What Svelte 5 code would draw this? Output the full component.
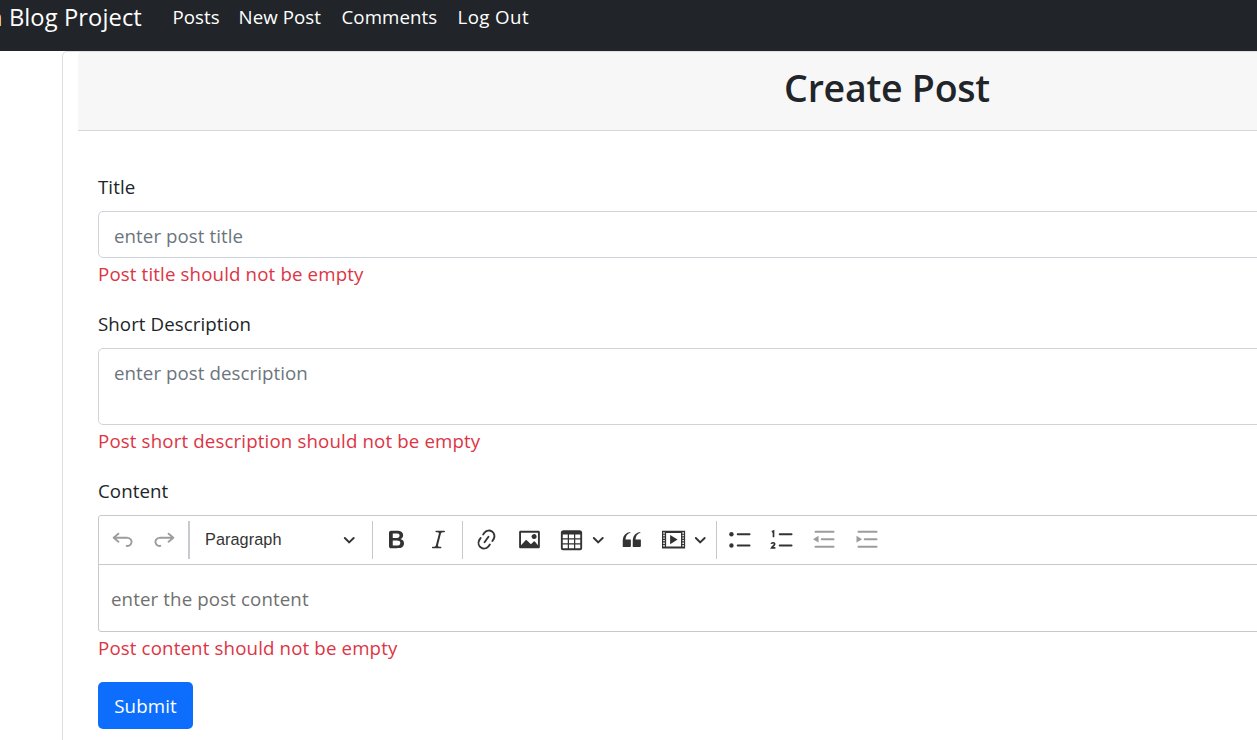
<script>
  const links = [
    { label: 'Posts', width: 66 },
    { label: 'New Post', width: 103 },
    { label: 'Comments', width: 116 },
    { label: 'Log Out', width: 92 }
  ];
  const icons = {
    undo: 'm5.042 9.367 2.189 1.837a.75.75 0 0 1-.965 1.149l-3.788-3.18a.747.747 0 0 1-.21-.284.75.75 0 0 1 .17-.945L6.23 4.762a.75.75 0 1 1 .964 1.15L4.863 7.866h8.917A.75.75 0 0 1 14 7.9a4 4 0 1 1-1.477 7.718l.344-1.489a2.5 2.5 0 1 0 1.094-4.73l.008-.032H5.042z',
    redo: 'm14.958 9.367-2.189 1.837a.75.75 0 0 0 .965 1.149l3.788-3.18a.747.747 0 0 0 .21-.284.75.75 0 0 0-.17-.945L13.77 4.762a.75.75 0 1 0-.964 1.15l2.331 1.955H6.22A.75.75 0 0 0 6 7.9a4 4 0 1 0 1.477 7.718l-.344-1.489A2.5 2.5 0 1 1 6.039 9.4l-.008-.032h8.927z',
    bold: 'M10.187 17H5.773c-.637 0-1.092-.138-1.364-.415-.273-.277-.409-.718-.409-1.323V4.738c0-.617.14-1.062.419-1.332.279-.27.73-.406 1.354-.406h4.68c.69 0 1.288.041 1.793.124.506.083.96.242 1.36.478.341.197.644.447.906.75a3.262 3.262 0 0 1 .808 2.162c0 1.401-.722 2.426-2.167 3.075C15.05 10.175 16 11.315 16 13.01a3.756 3.756 0 0 1-2.296 3.504 6.1 6.1 0 0 1-1.517.377c-.571.073-1.238.11-2 .11zm-.217-6.217H7v4.087h3.069c1.977 0 2.965-.69 2.965-2.072 0-.707-.256-1.22-.768-1.537-.512-.319-1.277-.478-2.296-.478zM7 5.13v3.619h2.606c.729 0 1.292-.067 1.69-.2a1.6 1.6 0 0 0 .91-.765c.165-.267.247-.566.247-.897 0-.707-.26-1.176-.778-1.409-.519-.232-1.31-.348-2.375-.348H7z',
    italic: 'm9.586 14.633.021.004c-.036.335.095.655.393.962.082.083.173.15.274.201h1.474a.6.6 0 1 1 0 1.2H5.304a.6.6 0 0 1 0-1.2h1.15c.474-.07.809-.182 1.005-.334.157-.122.291-.32.404-.597l2.416-9.55a1.053 1.053 0 0 0-.281-.823 1.12 1.12 0 0 0-.442-.296H8.15a.6.6 0 0 1 0-1.2h6.443a.6.6 0 1 1 0 1.2h-1.195c-.376.056-.65.155-.823.296-.215.175-.423.439-.623.79l-2.366 9.347z',
    link: 'm11.077 15 .991-1.416a.75.75 0 1 1 1.229.86l-1.148 1.64a.748.748 0 0 1-.217.206 5.251 5.251 0 0 1-8.503-5.955.741.741 0 0 1 .12-.274l1.147-1.639a.75.75 0 1 1 1.228.86L4.933 10.7l.006.003a3.75 3.75 0 0 0 6.132 4.294l.006.004zm5.494-5.335a.748.748 0 0 1-.12.274l-1.147 1.639a.75.75 0 1 1-1.228-.86l.86-1.23a3.75 3.75 0 0 0-6.144-4.301l-.86 1.229a.75.75 0 0 1-1.229-.86l1.148-1.64a.748.748 0 0 1 .217-.206 5.251 5.251 0 0 1 8.503 5.955zm-4.563-2.532a.75.75 0 0 1 .184 1.045l-3.155 4.505a.75.75 0 1 1-1.229-.86l3.155-4.506a.75.75 0 0 1 1.045-.184z',
    image: 'M6.91 10.54c.26-.23.64-.21.88.03l3.36 3.14 2.23-2.06a.64.64 0 0 1 .87 0l2.52 2.97V4.5H3.2v10.12l3.71-4.08zm10.27-7.51c.6 0 1.09.47 1.09 1.05v11.84c0 .59-.49 1.06-1.09 1.06H2.79c-.6 0-1.09-.47-1.09-1.06V4.08c0-.58.49-1.05 1.1-1.05h14.38zm-5.22 5.56a1.96 1.96 0 1 1 3.4-1.96 1.96 1.96 0 0 1-3.4 1.96z',
    table: 'M3 6v3h4V6H3zm0 4v3h4v-3H3zm0 4v3h4v-3H3zm5 3h4v-3H8v3zm5 0h4v-3h-4v3zm4-4v-3h-4v3h4zm0-4V6h-4v3h4zm1.5 8a1.5 1.5 0 0 1-1.5 1.5H3A1.5 1.5 0 0 1 1.5 17V4c.222-.863 1.068-1.5 2-1.5h13c.932 0 1.778.637 2 1.5v13zM12 13v-3H8v3h4zm0-4V6H8v3h4z',
    quote: 'M3 10.423a6.5 6.5 0 0 1 6.056-6.408l.038.67C6.448 5.423 5.354 7.663 5.22 10H9c.552 0 .5.432.5.986v4.511c0 .554-.448.503-1 .503h-5c-.552 0-.5-.449-.5-1.003v-4.574zm8 0a6.5 6.5 0 0 1 6.056-6.408l.038.67c-2.646.739-3.74 2.979-3.873 5.315H17c.552 0 .5.432.5.986v4.511c0 .554-.448.503-1 .503h-5c-.552 0-.5-.449-.5-1.003v-4.574z'
  };
</script>

{#snippet icon(name)}
  <span class="tool"><svg viewBox="0 0 20 20"><path d={icons[name]} /></svg></span>
{/snippet}

{#snippet arrow()}
  <svg class="arrow" viewBox="0 0 10 10"><path d="M.941 4.523a.75.75 0 1 1 1.06-1.06l3.006 3.005 3.005-3.005a.75.75 0 1 1 1.06 1.06l-3.549 3.55a.75.75 0 0 1-1.168-.136L.941 4.523z" /></svg>
{/snippet}

<div class="page">
  <nav>
    <span class="brand">n Blog Project</span>
    {#each links as link}
      <a href="#top" style:width="{link.width}px">{link.label}</a>
    {/each}
  </nav>

  <main class="card">
    <header><h2>Create Post</h2></header>
    <form>
      <label class="title" for="title">Title</label>
      <input id="title" placeholder="enter post title" />
      <p class="error e1">Post title should not be empty</p>

      <label class="desc" for="desc">Short Description</label>
      <textarea id="desc" placeholder="enter post description"></textarea>
      <p class="error e2">Post short description should not be empty</p>

      <span class="label content">Content</span>
      <div class="editor">
        <div class="toolbar">
          <div class="group history">
            <span class="off">{@render icon('undo')}</span>
            <span class="off">{@render icon('redo')}</span>
          </div>
          <div class="heading">Paragraph {@render arrow()}</div>
          <div class="group basic">
            {@render icon('bold')}
            {@render icon('italic')}
          </div>
          <div class="group insert">
            {@render icon('link')}
            {@render icon('image')}
            <span class="split">{@render icon('table')}{@render arrow()}</span>
            {@render icon('quote')}
            <span class="split">
              <span class="tool">
                <svg class="media" viewBox="0 0 22 20">
                  <path fill-rule="evenodd" d="M1.6 3h18.5v14.2H1.6zM4.9 4.7v10.8h11.9V4.7z" />
                  <path d="M8.1 6.3v7.5l6-3.75z" />
                  <path class="holes" d="M3.2 4.2v12.4M18.5 4.2v12.4" />
                </svg>
              </span>{@render arrow()}
            </span>
          </div>
          <div class="group lists">
            <span class="tool"><svg viewBox="0 0 20 20"><circle cx="2.75" cy="5.75" r="1.75" /><circle cx="2.75" cy="14.75" r="1.75" /><path class="line" d="M7.75 5.75h9.5M7.75 14.75h9.5" /></svg></span>
            <span class="tool"><svg viewBox="0 0 20 20"><path class="line" d="M7.75 5.75h9.5M7.75 14.75h9.5" /><path class="digit" d="M1.5 3.9 2.8 3.3v4.9M1 13.5c.2-1.3 2.9-1.2 2.7.2-.1 1.1-1.7 1.8-2.4 3h3" /></svg></span>
            <span class="tool off"><svg viewBox="0 0 20 20"><path class="line" d="M2.75 3.75h14.5M7.75 9.75h9.5M2.75 15.75h14.5" /><path d="m5.2 7 .1 5.4L1.4 10.1q-.6-.4 0-.8z" /></svg></span>
            <span class="tool off"><svg viewBox="0 0 20 20"><path class="line" d="M2.75 3.75h14.5M7.75 9.75h9.5M2.75 15.75h14.5" /><path d="m1.2 7 3.9 2.3q.6.4 0 .8l-3.9 2.3z" /></svg></span>
          </div>
        </div>
        <div class="body">enter the post content</div>
      </div>
      <p class="error e3">Post content should not be empty</p>
      <button type="button">Submit</button>
    </form>
  </main>
</div>

<style>
  :global(body) { margin: 0; overflow: hidden; background: #fff; }
  * { box-sizing: border-box; }
  .page {
    width: 1257px;
    height: 740px;
    overflow: hidden;
    font: 18.7px/30px "Open Sans", "Noto Sans", sans-serif;
    letter-spacing: 0.07px;
    color: #212529;
  }
  nav {
    display: flex;
    height: 51px;
    padding-top: 2px;
    background: #212529;
    color: #fff;
    white-space: nowrap;
  }
  .brand { width: 184.5px; margin-left: -12px; flex: none; font-size: 23.7px; letter-spacing: 0.1px; }
  nav a { flex: none; color: #fff; text-decoration: none; }
  nav a:last-child { letter-spacing: 0.4px; }
  .card {
    width: 1650px;
    height: 720px;
    margin-left: 62px;
    padding: 0 15px;
    border: 1px solid #dfdfdf;
    border-radius: 5px;
  }
  header {
    height: 79px;
    padding-top: 12px;
    background: #f7f7f7;
    border-bottom: 1px solid #d8d8d8;
    border-radius: 4px 4px 0 0;
    text-align: center;
  }
  h2 { margin: 0; font-size: 37.5px; line-height: 48px; font-weight: 600; letter-spacing: -0.25px; }
  form { display: flex; flex-direction: column; align-items: flex-start; padding: 41px 20px; }
  label, .label { display: block; height: 39px; }
  input, textarea {
    width: 100%;
    height: 47px;
    padding: 9px 15px 7px;
    border: 1px solid #ced4da;
    border-radius: 5px;
    background: #fff;
    font: inherit;
    letter-spacing: inherit;
    outline: 0;
    resize: none;
  }
  textarea { height: 77px; overflow: hidden; }
  ::placeholder { color: #6c757d; opacity: 1; }
  .error { height: 51px; margin: 0; padding-top: 1px; color: #dc3545; letter-spacing: 0.14px; }
  .e3 { height: 50px; }
  .editor { width: 100%; height: 117px; border: 1px solid #c9c9c9; border-radius: 3px; }
  .toolbar { display: flex; height: 49px; padding: 5px 3px; border-bottom: 1px solid #c9c9c9; }
  .toolbar > * { height: 38px; }
  .group { display: flex; align-items: center; border-right: 1px solid #c9c9c9; }
  .history { width: 88px; border-right: 2px solid #c9c9cf; }
  .history .tool { padding-right: 1.5px; }
  .heading {
    display: flex;
    align-items: center;
    justify-content: space-between;
    width: 183px;
    padding: 0 17px 2px 15px;
    border-right: 1px solid #c9c9c9;
    font: 16.25px "Liberation Sans", sans-serif;
    color: #333;
  }
  .basic { width: 90px; padding-left: 2px; }
  .insert { width: 254px; padding-left: 2.5px; }
  .lists { padding-left: 2px; border: 0; }
  .tool { display: flex; align-items: center; justify-content: center; flex: none; width: 42.4px; height: 38px; padding-bottom: 1.5px; }
  .split { display: flex; align-items: center; width: 60px; }
  .split .arrow { margin: 0 0 1.5px -1px; }
  svg { display: block; flex: none; width: 25px; height: 25px; fill: #333; }
  .media { width: 27.5px; }
  .arrow { width: 12.5px; height: 12.5px; }
  .off { opacity: 0.6; }
  .off svg { fill: #5c5c5c; }
  .line { fill: none; stroke: #333; stroke-width: 1.5; stroke-linecap: round; }
  .off .line { stroke: #5c5c5c; }
  .digit { fill: none; stroke: #333; stroke-width: 1.35; }
  .holes { stroke: #fff; stroke-width: 1.2; stroke-dasharray: 1.1 0.95; }
  .body { padding: 19px 12px; color: #707070; letter-spacing: 0.12px; }
  button {
    width: 95px;
    height: 47px;
    padding: 0;
    border: 0;
    border-radius: 5px;
    background: #0d6efd;
    color: #fff;
    font: inherit;
    letter-spacing: 0.12px;
  }
</style>
